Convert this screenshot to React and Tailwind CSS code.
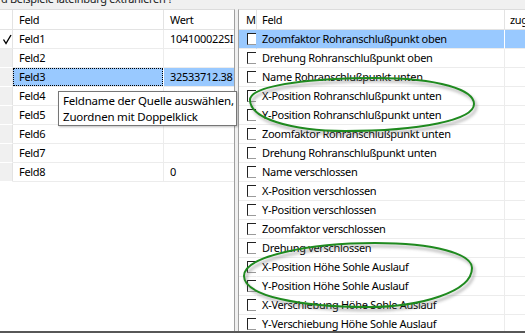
import React from "react";

const leftRows = [
  { f: "Feld1", w: "104100022SI", check: true },
  { f: "Feld2", w: "" },
  { f: "Feld3", w: "32533712.38", sel: true },
  { f: "Feld4", w: "5929971.093" },
  { f: "Feld5", w: "5929971.093" },
  { f: "Feld6", w: "" },
  { f: "Feld7", w: "" },
  { f: "Feld8", w: "0" },
];

const rightRows = [
  "Zoomfaktor Rohranschlußpunkt oben",
  "Drehung Rohranschlußpunkt oben",
  "Name Rohranschlußpunkt unten",
  "X-Position Rohranschlußpunkt unten",
  "Y-Position Rohranschlußpunkt unten",
  "Zoomfaktor Rohranschlußpunkt unten",
  "Drehung Rohranschlußpunkt unten",
  "Name verschlossen",
  "X-Position verschlossen",
  "Y-Position verschlossen",
  "Zoomfaktor verschlossen",
  "Drehung verschlossen",
  "X-Position Höhe Sohle Auslauf",
  "Y-Position Höhe Sohle Auslauf",
  "X-Verschiebung Höhe Sohle Auslauf",
  "Y-Verschiebung Höhe Sohle Auslauf",
];

function Check() {
  return (
    <svg width="12" height="18" viewBox="0 0 12 18" className="block">
      <path d="M3.5 9.5 L6 13.5 L11 5" fill="none" stroke="#000" strokeWidth="1.4" />
    </svg>
  );
}

function Box() {
  return (
    <div className="w-[12px] h-[12px] border-l-[1.5px] border-t-[1.5px] border-r border-b border-l-[#222] border-t-[#222] border-r-[#9a9a9a] border-b-[#9a9a9a] bg-white" />
  );
}

export default function App() {
  return (
    <div className="relative w-[525px] h-[333px] overflow-hidden bg-[#f0f0f0] flex flex-col text-[11px] tracking-[-0.3px] text-black font-['Noto_Sans',_'Liberation_Sans',_sans-serif]">
      {/* top strip */}
      <div className="h-[9px] shrink-0 overflow-hidden">
        <div className="-mt-[8px] pl-[1px] leading-[14px] whitespace-nowrap text-[#222]">
          d Beispiele lateinburg extrahieren ?
        </div>
      </div>

      <div className="flex flex-1 min-h-0">
        {/* left grid */}
        <div className="w-[235px] shrink-0 bg-white border-r border-t border-[#a0a0a0] border-t-[#dcdcdc] flex flex-col overflow-hidden">
          <div className="flex h-[20px] shrink-0 border-b border-[#e3e3e3]">
            <div className="w-[13px] shrink-0 border-r border-[#e3e3e3]" />
            <div className="w-[151px] shrink-0 border-r border-[#e3e3e3] pl-[6px] leading-[19px]">Feld</div>
            <div className="flex-1 pl-[6px] leading-[19px]">Wert</div>
          </div>
          {leftRows.map((r, i) => (
            <div key={i} className="flex h-[19px] shrink-0">
              <div
                className={
                  "w-[13px] shrink-0 border-r border-b border-r-[#e3e3e3] " +
                  (r.check ? "bg-white border-b-[#ececec]" : "bg-[#f0f0f0] border-b-[#ffffff]")
                }
              >
                {r.check ? <Check /> : null}
              </div>
              <div
                className={
                  "w-[151px] shrink-0 border-r border-b whitespace-nowrap overflow-hidden " +
                  (r.sel
                    ? "bg-[#99c9ff] border-r-white border-b-[#ececec]"
                    : "border-r-[#ececec] border-b-[#ececec]")
                }
              >
                {r.sel ? (
                  <div className="h-[18px] border border-dotted border-black pl-[5px] leading-[16px]">{r.f}</div>
                ) : (
                  <div className="pl-[6px] leading-[18px]">{r.f}</div>
                )}
              </div>
              <div
                className={
                  "flex-1 border-b border-[#ececec] pl-[6px] leading-[18px] whitespace-nowrap overflow-hidden " +
                  (r.sel ? "bg-[#99c9ff]" : "")
                }
              >
                {r.w}
              </div>
            </div>
          ))}
        </div>

        {/* splitter */}
        <div className="w-[3px] shrink-0 bg-[#f0f0f0]" />

        {/* right grid */}
        <div className="flex-1 min-w-0 bg-white border-l border-t border-[#a0a0a0] border-t-[#dcdcdc] flex flex-col overflow-hidden">
          <div className="flex h-[20px] shrink-0 border-b border-[#e3e3e3]">
            <div className="w-[18px] shrink-0 border-r border-[#e3e3e3] pl-[7px] leading-[19px] overflow-hidden">M</div>
            <div className="w-[248px] shrink-0 border-r border-[#e3e3e3] pl-[5px] leading-[19px]">Feld</div>
            <div className="flex-1 pl-[5px] leading-[19px] whitespace-nowrap overflow-hidden">zug</div>
          </div>
          {rightRows.map((t, i) => {
            const sel = i === 0;
            return (
              <div key={i} className={"flex h-[19px] shrink-0 " + (sel ? "bg-[#99c9ff]" : "")}>
                <div className="w-[18px] shrink-0 border-r border-b border-r-transparent border-b-[#ececec] pl-[8px] pt-[3px] overflow-hidden">
                  <Box />
                </div>
                <div
                  className={
                    "w-[248px] shrink-0 border-r border-b pl-[5px] leading-[18px] whitespace-nowrap overflow-hidden " +
                    (sel ? "border-r-white border-b-[#ececec]" : "border-r-[#ececec] border-b-[#ececec]")
                  }
                >
                  {t}
                </div>
                <div className="flex-1 border-b border-[#ececec]" />
              </div>
            );
          })}
        </div>
      </div>

      <div className="h-[2px] shrink-0 bg-[#575757]" />

      {/* tooltip */}
      <div className="absolute left-[58px] top-[91px] w-[179px] h-[35px] bg-white border border-[#767676] pl-[4px] pt-[1px] leading-[16px] text-[11.5px] tracking-[-0.2px] whitespace-nowrap shadow-[1px_1px_2px_rgba(0,0,0,0.25)]">
        <div>Feldname der Quelle auswählen,</div>
        <div>Zuordnen mit Doppelklick</div>
      </div>

      {/* green ellipses */}
      <svg className="absolute left-0 top-0 pointer-events-none" width="525" height="333" viewBox="0 0 525 333">
        <defs>
          <filter id="sh" x="-10%" y="-30%" width="120%" height="160%">
            <feGaussianBlur stdDeviation="1.8" />
          </filter>
        </defs>
        <g transform="translate(2,3)" filter="url(#sh)" opacity="0.45">
          <path d="M250 100 C250 84 320 78 375 78 C440 78 474 90 474 104 C474 120 420 131 345 131 C290 131 250 118 250 100 Z" fill="none" stroke="#666" strokeWidth="2.5" />
          <path d="M244 276 C244 256 310 243 375 243 C435 243 472 254 472 268 C472 292 420 307 368 307 C300 307 244 296 244 276 Z" fill="none" stroke="#666" strokeWidth="2.5" />
        </g>
        <path d="M250 100 C250 84 320 78 375 78 C440 78 474 90 474 104 C474 120 420 131 345 131 C290 131 250 118 250 100 Z" fill="none" stroke="#1f8a1f" strokeWidth="2" />
        <path d="M244 276 C244 256 310 243 375 243 C435 243 472 254 472 268 C472 292 420 307 368 307 C300 307 244 296 244 276 Z" fill="none" stroke="#1f8a1f" strokeWidth="2" />
      </svg>
    </div>
  );
}
